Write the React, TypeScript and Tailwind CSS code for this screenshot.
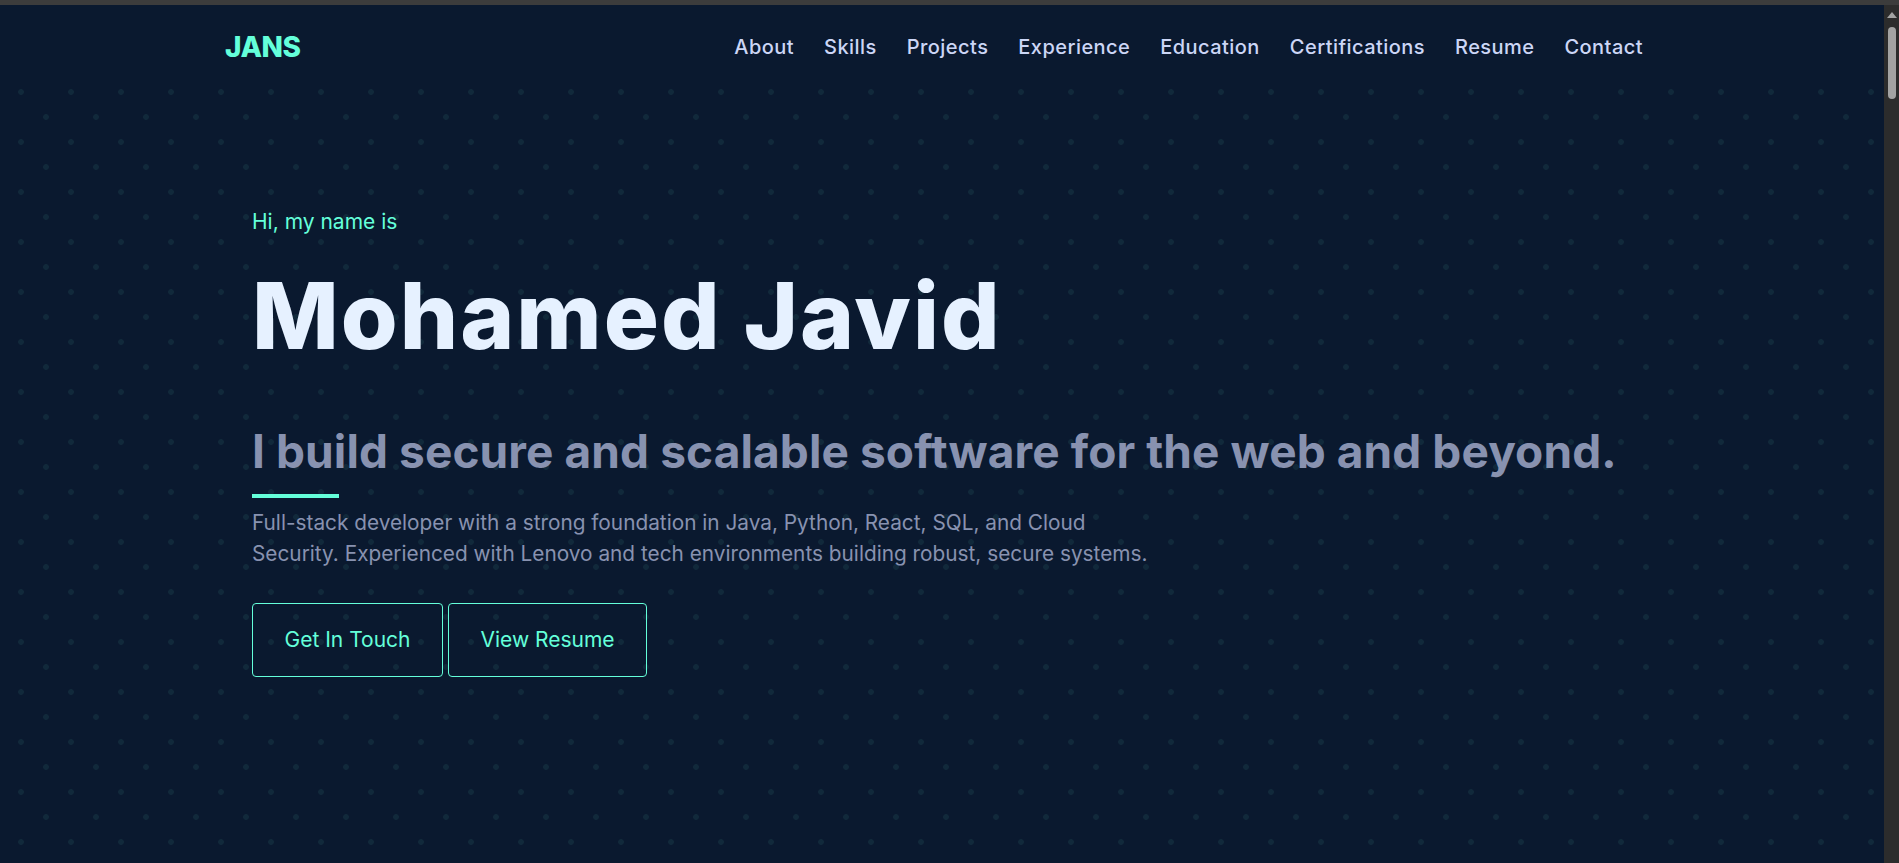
const navLinks = ['About', 'Skills', 'Projects', 'Experience', 'Education', 'Certifications', 'Resume', 'Contact']

export default function App() {
  return (
    <div className="h-[863px] overflow-hidden bg-[#0a192f] font-['Inter','Noto_Sans',sans-serif]">
      {/* window chrome strip */}
      <div className="h-[5px] bg-[#3c3c3c]" />

      <div className="flex h-[858px]">
        <main className="relative flex-1 bg-[#0a192f] bg-[radial-gradient(circle_at_21px_37px,#11293b_2.5px,transparent_3.2px),radial-gradient(circle_at_46px_12px,#11293b_2.5px,transparent_3.2px)] bg-[size:50px_50px]">
          {/* Header */}
          <header className="bg-[#0a192f] h-[84px]">
            <div className="mx-auto flex h-full max-w-[1440px] items-center justify-between">
              <a className="ml-[3px] text-[28px] font-extrabold tracking-[-0.5px] text-[#64ffda]">JANS</a>
              <nav className="mr-[4px] flex items-center">
                {navLinks.map((link) => (
                  <a key={link} className="px-[15px] text-[20px] font-medium tracking-[0.45px] text-[#ccd6f6]">
                    {link}
                  </a>
                ))}
              </nav>
            </div>
          </header>

          {/* Hero */}
          <section className="mx-auto max-w-[1440px] pl-[30px]">
            <p className="mt-[119px] text-[21px] leading-[28px] text-[#64ffda]">Hi, my name is</p>
            <h1 className="mt-[30px] text-[92px] leading-[100px] font-extrabold tracking-[2px] text-[#e6f1ff]">
              Mohamed Javid
            </h1>
            <h2 className="mt-[57px] text-[46px] leading-[56px] font-bold tracking-[0.1px] text-[#8892b0]">
              I build secure and scalable software for the web and beyond.
            </h2>
            <div className="mt-[15px] h-[4px] w-[87px] bg-[#64ffda]" />
            <p className="mt-[9px] max-w-[915px] text-[20.8px] leading-[31px] text-[#8892b0]">
              Full-stack developer with a strong foundation in Java, Python, React, SQL, and Cloud Security. Experienced with Lenovo and tech environments building robust, secure systems.
            </p>
            <div className="mt-[34px] flex gap-[5px]">
              <a className="flex h-[74px] w-[191px] items-center justify-center rounded-[4px] border border-[#64ffda] text-[21px] text-[#64ffda]">
                Get In Touch
              </a>
              <a className="flex h-[74px] w-[199px] items-center justify-center rounded-[4px] border border-[#64ffda] text-[21px] text-[#64ffda]">
                View Resume
              </a>
            </div>
          </section>
        </main>

        {/* scrollbar */}
        <div className="flex w-[15px] flex-col items-center bg-[#2c2c2c] pt-[7px]">
          <div className="h-0 w-0 border-x-[5px] border-b-[6px] border-x-transparent border-b-[#a3a3a3]" />
          <div className="mt-[9px] h-[72px] w-[8px] rounded-full bg-[#a3a3a3]" />
        </div>
      </div>
    </div>
  )
}
